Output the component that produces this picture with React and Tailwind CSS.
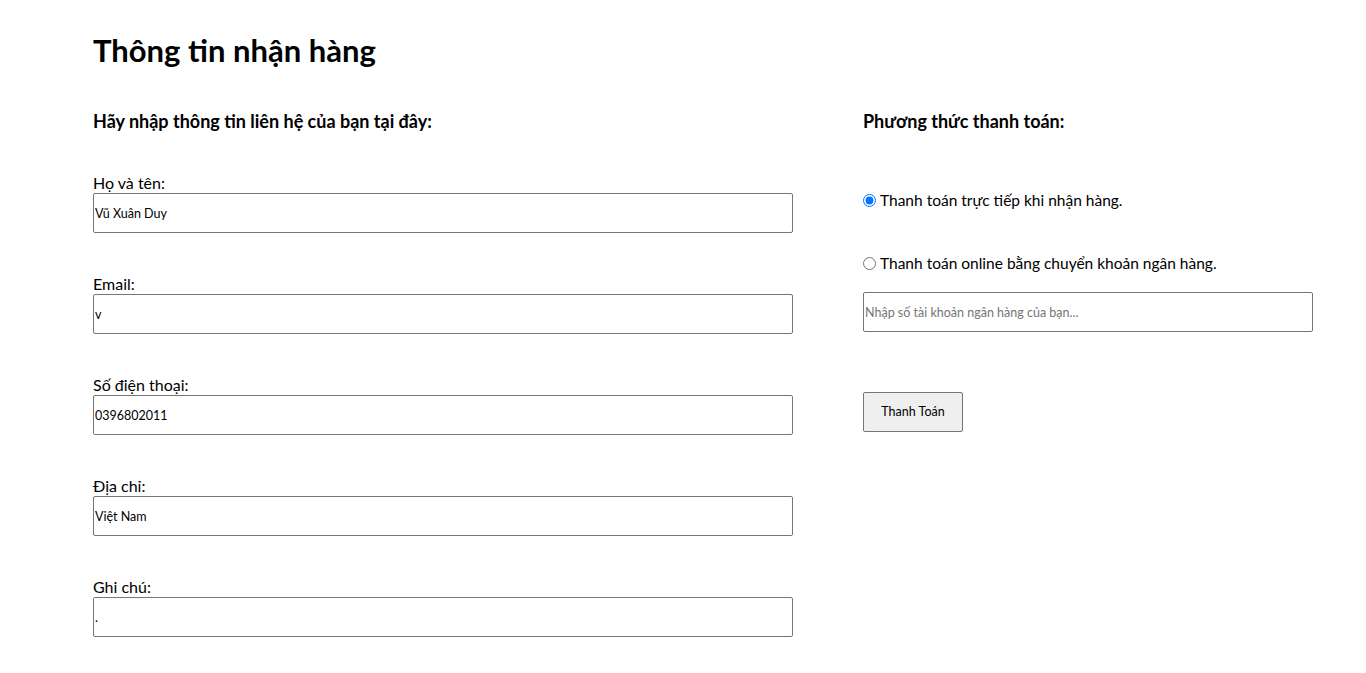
import { useState } from "react";

const fields = [
    { name: "fullName", label: "Họ và tên:", value: "Vũ Xuân Duy" },
    { name: "email", label: "Email:", value: "v" },
    { name: "phone", label: "Số điện thoại:", value: "0396802011" },
    { name: "address", label: "Địa chỉ:", value: "Việt Nam" },
    { name: "note", label: "Ghi chú:", value: "." },
];

const App = () => {
    const [formData, setFormData] = useState(
        Object.fromEntries(fields.map((f) => [f.name, f.value]))
    );
    const [payment, setPayment] = useState("cod");
    const [bankAccount, setBankAccount] = useState("");

    const handleChange = (e) => {
        const { name, value } = e.target;
        setFormData({ ...formData, [name]: value });
    };

    return (
        <div className="bg-white text-black font-['Lato','Noto_Sans',sans-serif]">
            <div className="pl-[93px] pt-[31px] pb-[20px]">
                <h1 className="text-[31px] font-bold leading-[38px]">Thông tin nhận hàng</h1>

                <div className="flex gap-[70px] mt-[40px]">
                    {/* contact info */}
                    <div className="w-[700px]">
                        <h3 className="text-[18px] font-bold leading-[24px]">Hãy nhập thông tin liên hệ của bạn tại đây:</h3>
                        <div className="mt-[39px] flex flex-col gap-[40px]">
                            {fields.map((f) => (
                                <div key={f.name}>
                                    <label className="block text-[16px] leading-[21px]">{f.label}</label>
                                    <input
                                        type="text"
                                        name={f.name}
                                        value={formData[f.name]}
                                        onChange={handleChange}
                                        className="w-full h-10 border border-[#767676] rounded-[2px] px-[1px] text-[12.5px] focus:outline-none"
                                    />
                                </div>
                            ))}
                        </div>
                    </div>

                    {/* payment */}
                    <div className="w-[450px]">
                        <h3 className="text-[18px] font-bold leading-[24px]">Phương thức thanh toán:</h3>
                        <label className="flex items-center mt-[57px] text-[15.5px] leading-[20px]">
                            <input
                                type="radio"
                                name="payment"
                                checked={payment === "cod"}
                                onChange={() => setPayment("cod")}
                                className="w-[13px] h-[13px] mr-[4px] accent-[#0075ff]"
                            />
                            Thanh toán trực tiếp khi nhận hàng.
                        </label>
                        <label className="flex items-center mt-[43px] text-[15.5px] leading-[20px]">
                            <input
                                type="radio"
                                name="payment"
                                checked={payment === "bank"}
                                onChange={() => setPayment("bank")}
                                className="w-[13px] h-[13px] mr-[4px] accent-[#0075ff]"
                            />
                            Thanh toán online bằng chuyển khoản ngân hàng.
                        </label>
                        <input
                            type="text"
                            value={bankAccount}
                            onChange={(e) => setBankAccount(e.target.value)}
                            placeholder="Nhập số tài khoản ngân hàng của bạn..."
                            className="mt-[19px] w-full h-10 border border-[#767676] rounded-[2px] px-[1px] text-[12.5px] placeholder:text-[#757575] focus:outline-none"
                        />
                        <button className="mt-[60px] w-[100px] h-10 bg-[#efefef] border border-[#767676] rounded-[2px] text-[12.5px]">
                            Thanh Toán
                        </button>
                    </div>
                </div>
            </div>
        </div>
    );
};

export default App;
